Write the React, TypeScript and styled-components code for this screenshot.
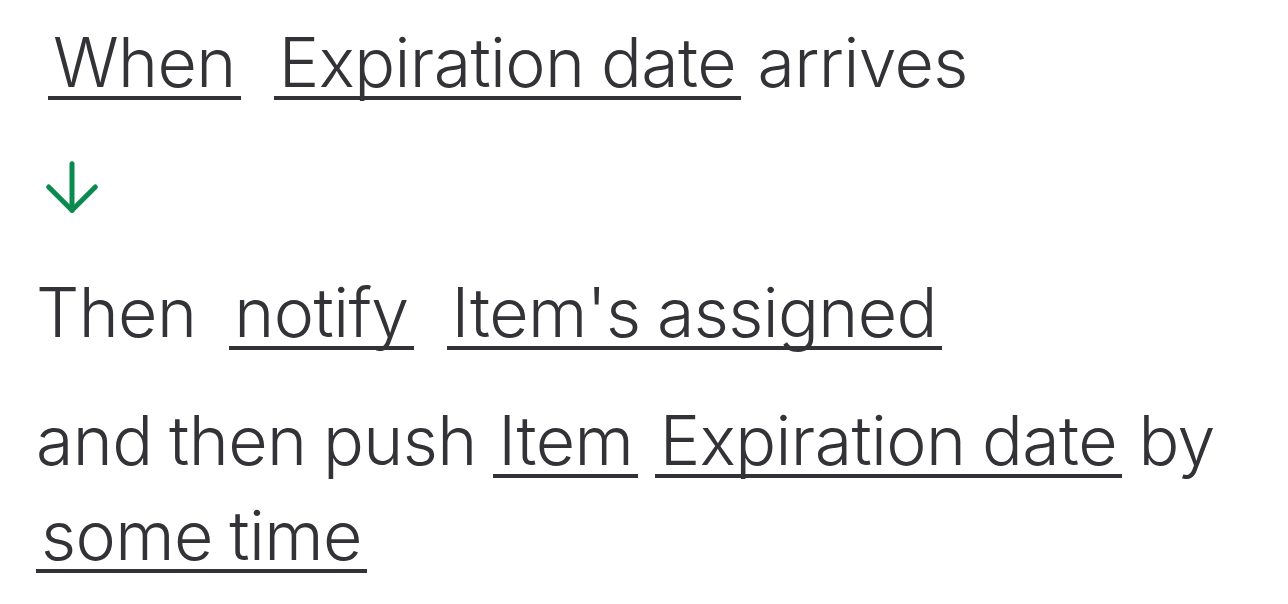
import React from "react";
import styled, { createGlobalStyle } from "styled-components";
import { ArrowDown } from "lucide-react";

const Global = createGlobalStyle`
  html, body { margin: 0; padding: 0; background: #ffffff; }
  body { font-family: Inter, "Noto Sans", sans-serif; color: #323237; }
`;

const Page = styled.div`
  display: flex;
  flex-direction: column;
  gap: 33px;
  padding: 15px 36px 0 36px;
  width: 1288px;
  box-sizing: border-box;
`;

const Sentence = styled.p<{ $indent?: number; $extraTop?: number }>`
  margin: ${(p) => p.$extraTop ?? 0}px 0 0 ${(p) => p.$indent ?? 0}px;
  font-size: 68px;
  line-height: 95px;
  font-weight: 350;
  letter-spacing: -0.6px;
  word-spacing: -2px;
  white-space: pre-wrap;
  color: #323237;
`;

const Token = styled.span`
  display: inline-block;
  line-height: 1;
  padding: 0 5px;
  border-bottom: 4px solid #323237;
  cursor: pointer;
`;

const ArrowRow = styled.div`
  display: flex;
  margin: 4px 0 0 -4px;
  height: 80px;
  color: #0b8a4f;
`;

export default function App() {
  return (
    <>
      <Global />
      <Page>
        <Sentence $indent={12}>
          <Token>When</Token>
          {"  "}
          <Token>Expiration date</Token>
          {" arrives"}
        </Sentence>
        <ArrowRow>
          <ArrowDown size={80} strokeWidth={1.5} />
        </ArrowRow>
        <Sentence $extraTop={5}>
          {"Then  "}
          <Token>notify</Token>
          {"  "}
          <Token>Item's assigned</Token>
        </Sentence>
        <Sentence>
          {"and then push "}
          <Token>Item</Token>
          {" "}
          <Token>Expiration date</Token>
          {" by "}
          <Token>some time</Token>
        </Sentence>
      </Page>
    </>
  );
}
